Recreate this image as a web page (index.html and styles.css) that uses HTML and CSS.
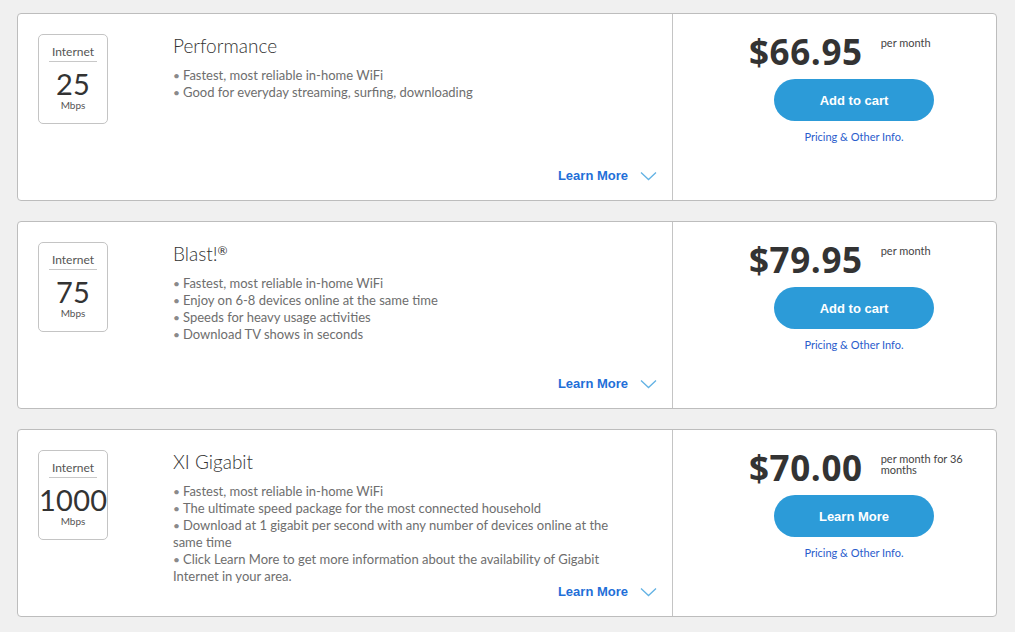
FILE: index.html
```html
<!DOCTYPE html>
<html lang="en">
<head>
  <meta charset="UTF-8">
  <title>Internet Plans</title>
  <link rel="stylesheet" href="styles.css">
</head>
<body>
  <div id="plans">

    <div class="plan">
      <div class="plan-info">
        <div class="speed">
          <div class="speed-label">Internet</div>
          <div class="speed-num">25</div>
          <div class="speed-unit">Mbps</div>
        </div>
        <div class="details">
          <h2 class="plan-name">Performance</h2>
          <ul class="features">
            <li>Fastest, most reliable in-home WiFi</li>
            <li>Good for everyday streaming, surfing, downloading</li>
          </ul>
          <a class="learn-more" href="#">Learn More
            <svg width="17" height="10" viewBox="0 0 17 10"><path d="M1 1.5 L8.5 8.5 L16 1.5" fill="none" stroke="#62b2e4" stroke-width="1.3"/></svg>
          </a>
        </div>
      </div>
      <div class="plan-buy">
        <div class="price-row">
          <span class="price">$66.95</span>
          <span class="term">per month</span>
        </div>
        <button class="cta">Add to cart</button>
        <a class="pricing" href="#">Pricing &amp; Other Info.</a>
      </div>
    </div>

    <div class="plan">
      <div class="plan-info">
        <div class="speed">
          <div class="speed-label">Internet</div>
          <div class="speed-num">75</div>
          <div class="speed-unit">Mbps</div>
        </div>
        <div class="details">
          <h2 class="plan-name">Blast!<sup>&reg;</sup></h2>
          <ul class="features">
            <li>Fastest, most reliable in-home WiFi</li>
            <li>Enjoy on 6-8 devices online at the same time</li>
            <li>Speeds for heavy usage activities</li>
            <li>Download TV shows in seconds</li>
          </ul>
          <a class="learn-more" href="#">Learn More
            <svg width="17" height="10" viewBox="0 0 17 10"><path d="M1 1.5 L8.5 8.5 L16 1.5" fill="none" stroke="#62b2e4" stroke-width="1.3"/></svg>
          </a>
        </div>
      </div>
      <div class="plan-buy">
        <div class="price-row">
          <span class="price">$79.95</span>
          <span class="term">per month</span>
        </div>
        <button class="cta">Add to cart</button>
        <a class="pricing" href="#">Pricing &amp; Other Info.</a>
      </div>
    </div>

    <div class="plan">
      <div class="plan-info">
        <div class="speed">
          <div class="speed-label">Internet</div>
          <div class="speed-num">1000</div>
          <div class="speed-unit">Mbps</div>
        </div>
        <div class="details">
          <h2 class="plan-name">XI Gigabit</h2>
          <ul class="features">
            <li>Fastest, most reliable in-home WiFi</li>
            <li>The ultimate speed package for the most connected household</li>
            <li>Download at 1 gigabit per second with any number of devices online at the same time</li>
            <li>Click Learn More to get more information about the availability of Gigabit Internet in your area.</li>
          </ul>
          <a class="learn-more" href="#">Learn More
            <svg width="17" height="10" viewBox="0 0 17 10"><path d="M1 1.5 L8.5 8.5 L16 1.5" fill="none" stroke="#62b2e4" stroke-width="1.3"/></svg>
          </a>
        </div>
      </div>
      <div class="plan-buy">
        <div class="price-row">
          <span class="price">$70.00</span>
          <span class="term">per month for 36 months</span>
        </div>
        <button class="cta">Learn More</button>
        <a class="pricing" href="#">Pricing &amp; Other Info.</a>
      </div>
    </div>

  </div>
</body>
</html>
```

FILE: styles.css
```css
body {
  margin: 0;
  padding: 13px 18px 10px 17px;
  background: #f0f0f0;
  font-family: Lato, "Open Sans", sans-serif;
  color: #333;
}
#plans {
  display: flex;
  flex-direction: column;
  gap: 20px;
}
.plan {
  display: flex;
  min-height: 186px;
  background: #fff;
  border: 1px solid #bdbdbd;
  border-radius: 4px;
}
.plan-info {
  flex: 1;
  display: flex;
  padding: 20px 15px 16px 20px;
}
.speed {
  width: 68px;
  height: 88px;
  border: 1px solid #c4c4c4;
  border-radius: 5px;
  text-align: center;
  flex-shrink: 0;
}
.speed-label {
  font-size: 12px;
  color: #555;
  margin: 9px 10px 0;
  padding-bottom: 2px;
  border-bottom: 1px solid #c8c8c8;
}
.speed-num {
  font-size: 29px;
  line-height: 30px;
  margin-top: 7px;
  color: #333;
  letter-spacing: 0.3px;
}
.speed-unit {
  font-size: 10px;
  color: #555;
  line-height: 12px;
}
.details {
  flex: 1;
  display: flex;
  flex-direction: column;
  margin-left: 65px;
}
.plan-name {
  margin: 1px 0 10px;
  font-size: 19px;
  font-weight: 300;
  line-height: 22px;
  color: #333;
}
.plan-name sup {
  font-size: 12px;
  font-weight: 400;
  vertical-align: 6px;
  line-height: 0;
}
.features {
  list-style: none;
  margin: 0 0 -1px;
  padding: 0;
  font-size: 13px;
  line-height: 17px;
  color: #6e6e6e;
  max-width: 450px;
}
.features li::before {
  content: "\2022";
  margin-right: 3px;
  font-size: 12px;
  color: #8a8a8a;
}
.learn-more {
  margin-top: auto;
  margin-bottom: 1px;
  align-self: flex-end;
  display: flex;
  align-items: center;
  gap: 12px;
  font-family: "Liberation Sans", Arial, sans-serif;
  font-size: 13px;
  font-weight: bold;
  color: #1f6fd8;
  text-decoration: none;
}
.plan-buy {
  width: 324px;
  border-left: 1px solid #c4c4c4;
  padding: 16px 0 0 101px;
  box-sizing: border-box;
  display: flex;
  flex-direction: column;
}
.price-row {
  display: flex;
  align-items: flex-start;
  margin-left: -25px;
}
.price {
  font-family: "Open Sans", sans-serif;
  font-size: 35px;
  font-weight: 700;
  line-height: 44px;
  color: #333;
  letter-spacing: 0.6px;
}
.term {
  width: 92px;
  margin: 7px 0 0 18px;
  font-size: 11px;
  line-height: 11px;
  color: #444;
}
.cta {
  width: 160px;
  height: 42px;
  margin-top: 5px;
  border: none;
  border-radius: 21px;
  background: #2c9bd8;
  color: #fff;
  font-family: "Liberation Sans", Arial, sans-serif;
  font-size: 13px;
  font-weight: bold;
  cursor: pointer;
}
.pricing {
  width: 160px;
  margin-top: 9px;
  text-align: center;
  font-size: 11px;
  color: #2a5ccc;
  text-decoration: none;
}
```
